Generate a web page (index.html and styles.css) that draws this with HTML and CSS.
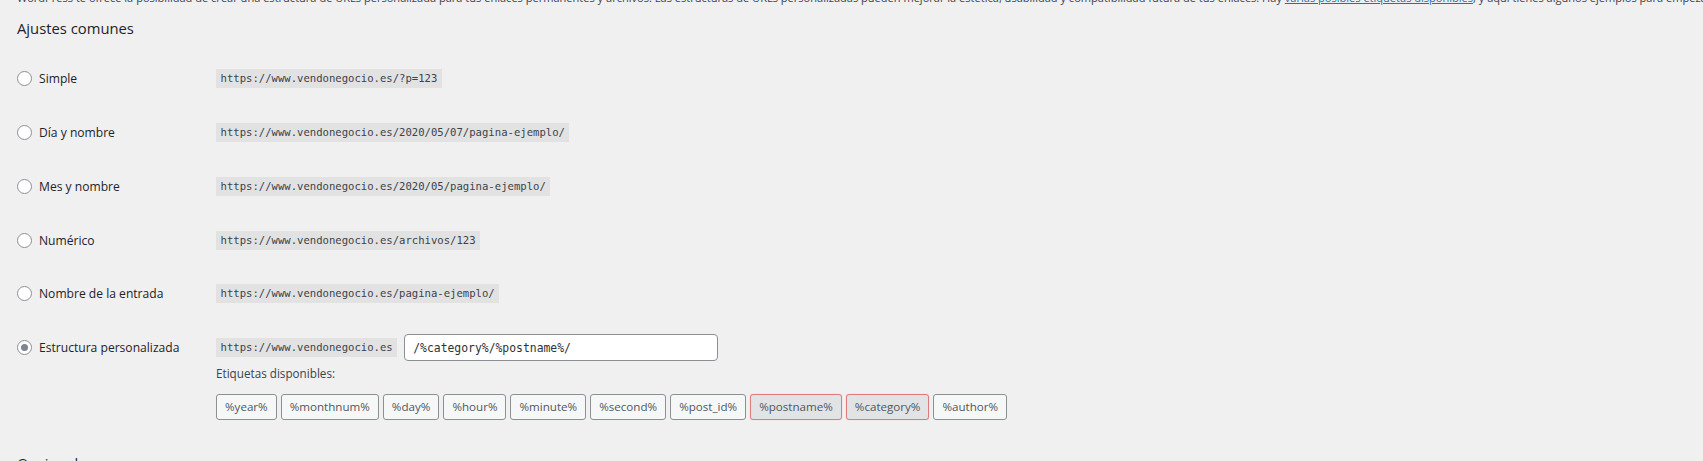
FILE: index.html
```html
<!DOCTYPE html>
<html lang="es">
<head>
<meta charset="utf-8">
<title>Enlaces permanentes</title>
<link rel="stylesheet" href="styles.css">
</head>
<body>
<div class="page">
  <p class="intro">WordPress te ofrece la posibilidad de crear una estructura de URLs personalizada para tus enlaces permanentes y archivos. Las estructuras de URLs personalizadas pueden mejorar la estética, usabilidad y compatibilidad futura de tus enlaces. Hay <a href="#">varias posibles etiquetas disponibles</a>, y aquí tienes algunos ejemplos para empezar.</p>
  <h2 class="section-title">Ajustes comunes</h2>
  <div class="form">
    <div class="row">
      <label class="opt"><input type="radio" name="p" class="radio"><span>Simple</span></label>
      <div class="val"><code class="code">https://www.vendonegocio.es/?p=123</code></div>
    </div>
    <div class="row">
      <label class="opt"><input type="radio" name="p" class="radio"><span>Día y nombre</span></label>
      <div class="val"><code class="code">https://www.vendonegocio.es/2020/05/07/pagina-ejemplo/</code></div>
    </div>
    <div class="row">
      <label class="opt"><input type="radio" name="p" class="radio"><span>Mes y nombre</span></label>
      <div class="val"><code class="code">https://www.vendonegocio.es/2020/05/pagina-ejemplo/</code></div>
    </div>
    <div class="row">
      <label class="opt"><input type="radio" name="p" class="radio"><span>Numérico</span></label>
      <div class="val"><code class="code">https://www.vendonegocio.es/archivos/123</code></div>
    </div>
    <div class="row">
      <label class="opt"><input type="radio" name="p" class="radio"><span>Nombre de la entrada</span></label>
      <div class="val"><code class="code">https://www.vendonegocio.es/pagina-ejemplo/</code></div>
    </div>
    <div class="row row-custom">
      <label class="opt opt-custom"><input type="radio" name="p" class="radio" checked><span>Estructura personalizada</span></label>
      <div class="val val-custom">
        <div class="custom-line">
          <code class="code">https://www.vendonegocio.es</code>
          <input class="structure" type="text" value="/%category%/%postname%/">
        </div>
        <div class="tags-label">Etiquetas disponibles:</div>
        <div class="tags">
          <button class="tag">%year%</button>
          <button class="tag">%monthnum%</button>
          <button class="tag">%day%</button>
          <button class="tag">%hour%</button>
          <button class="tag">%minute%</button>
          <button class="tag">%second%</button>
          <button class="tag">%post_id%</button>
          <button class="tag active">%postname%</button>
          <button class="tag active">%category%</button>
          <button class="tag">%author%</button>
        </div>
      </div>
    </div>
  </div>
  <h2 class="section-title next">Opcional</h2>
</div>
</body>
</html>
```

FILE: styles.css
```css
html, body {
  margin: 0;
  padding: 0;
  background: #f0f0f1;
  overflow: hidden;
}
body {
  font-family: "Open Sans", "Noto Sans", sans-serif;
  font-size: 12.1px;
  color: #1d2327;
}
.page {
  margin-top: -12px;
  padding-left: 17px;
}
.intro {
  margin: 0;
  white-space: nowrap;
  line-height: 19.5px;
  font-size: 11.05px;
  color: #3c434a;
}
.intro a {
  color: #2271b1;
  text-decoration: underline;
}
.section-title {
  margin: 10.5px 0 0;
  font-size: 14.8px;
  line-height: 20px;
  font-weight: 400;
  color: #1d2327;
}
.form {
  margin-top: 13.8px;
}
.row {
  display: grid;
  grid-template-columns: 199px 1fr;
  height: 53.8px;
  align-items: center;
}
.opt {
  display: flex;
  align-items: center;
  gap: 7px;
}
.radio {
  appearance: none;
  -webkit-appearance: none;
  margin: 0;
  width: 15px;
  height: 15px;
  border: 1px solid #8c8f94;
  border-radius: 50%;
  background: #fff;
  display: grid;
  place-items: center;
  flex: none;
}
.radio:checked::before {
  content: "";
  width: 7px;
  height: 7px;
  border-radius: 50%;
  background: #7e8590;
}
.code {
  display: inline-block;
  font-family: "DejaVu Sans Mono", monospace;
  font-size: 10.6px;
  line-height: 19px;
  height: 19px;
  padding: 0 4.5px;
  background: #e2e2e3;
  color: #3c434a;
}
.row-custom {
  height: auto;
  align-items: start;
  padding-top: 13.7px;
}
.opt-custom {
  height: 27px;
}
.custom-line {
  display: flex;
  align-items: center;
  gap: 7px;
  height: 27px;
}
.structure {
  box-sizing: border-box;
  width: 314px;
  height: 27px;
  margin: 0;
  padding: 0 8px;
  border: 1px solid #8c8f94;
  border-radius: 4px;
  background: #fff;
  font-family: "DejaVu Sans Mono", monospace;
  font-size: 11.4px;
  color: #2c3338;
}
.tags-label {
  margin-top: 2.4px;
  line-height: 19.5px;
  font-size: 11.7px;
  color: #3c434a;
}
.tags {
  display: flex;
  gap: 4px;
  margin-top: 10.6px;
}
.tag {
  box-sizing: border-box;
  height: 26px;
  margin: 0;
  padding: 0 8px;
  border: 1px solid #8c8f94;
  border-radius: 3px;
  background: #f6f7f7;
  color: #50575e;
  font-family: inherit;
  font-size: 11.6px;
}
.tag.active {
  background: #e2e3e5;
  border-color: #e07b7b;
  box-shadow: 0 0 1px #f0b0b0;
}
.section-title.next {
  margin-top: 32.8px;
}
```
